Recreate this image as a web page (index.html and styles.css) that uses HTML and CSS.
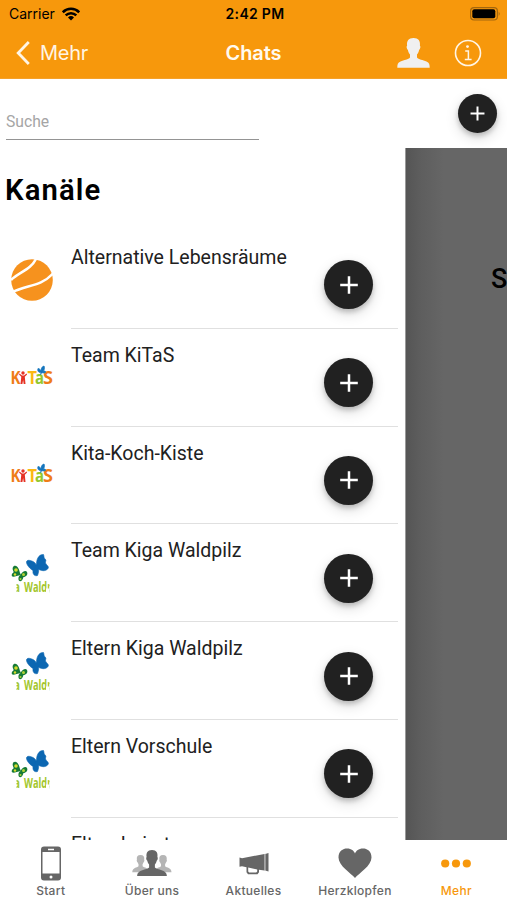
FILE: index.html
```html
<!DOCTYPE html>
<html lang="de">
<head>
  <meta charset="UTF-8">
  <meta name="viewport" content="width=device-width, initial-scale=1.0">
  <title>Chats</title>
  <link rel="stylesheet" href="styles.css">
</head>
<body>
  <!-- Symbole -->
  <svg class="symbols">
    <symbol id="plus" viewBox="0 0 24 24">
      <path d="M12 3.2v17.6M3.2 12h17.6" stroke="#fff" stroke-width="2.5"/>
    </symbol>
    <symbol id="kitas" viewBox="0 0 42 42">
      <g class="kitas-text">
        <text x="-.5" y="27" textLength="10" lengthAdjust="spacingAndGlyphs" fill="#ef7d17">K</text>
        <text x="16.500" y="27" textLength="9.500" lengthAdjust="spacingAndGlyphs" fill="#fbb814">T</text>
        <text x="24" y="27" textLength="9" lengthAdjust="spacingAndGlyphs" fill="#93c82d">a</text>
        <text x="32" y="27" textLength="10" lengthAdjust="spacingAndGlyphs" fill="#ef7d17">S</text>
      </g>
      <g transform="translate(0 1)">
        <circle cx="12" cy="15" r="1.700" fill="#e53224"/>
        <path d="M8.500 15.500l2.500 2h2l2.500-2 .6 1-2.300 2.300.7 7.200h-1.800l-.6-4-.7 4H9.500l.8-7.200L8 16.500z" fill="#e53224"/>
        <path d="M30.500 14.500c-4 .2-4-2.500-3.500-4 2 .3 3 1.600 3.500 4-1-3 .2-6 2.500-6.500 1 2 .4 5-2.500 6.500 2-1.800 3.500-2 4.300-.5-.8 1.200-2.300 1.200-4.300.5l-1 2z" fill="#1475bd" stroke="#1475bd" stroke-width=".8"/>
      </g>
    </symbol>
    <symbol id="waldpilz" viewBox="0 0 42 42">
      <g transform="translate(0 -1)" fill="#0c67b2" stroke="#0c67b2" stroke-width=".6">
        <path d="M24.500 20c-2.500 1-9.300-5.500-9-9 .2-3 5.500-1.500 8 .5 2 1.500 2 4 1 8.500z"/>
        <path d="M25.500 12.500c.3-6 3.300-9.300 7-9 .8 1.800 0 3 1.500 4.500 2 1.500 0 2.500.5 4 .5 1.800 3.500 3 2.800 5-2 3.800-7.800 3.500-11.800-.5z"/>
        <path d="M25 13.500c3 1.500 3.500 6.500 1.500 11-3 1-5-1.500-4.500-4.500l2-3z"/>
      </g>
      <path d="M10 23C5 24 0 26.500.8 22.500c.5-2 2-1 1.700-3C0 15 3.500 12 6.500 15 8.800 17.500 8 20 10 23z" fill="#167a36"/>
      <path d="M9.500 23c2-4 5.500-5 6.500-3 1.300 2.500-1 5-3.500 5-1 4.500-4.500 5.500-5 2.500-.3-2 .5-4 2-4.500z" fill="#167a36"/>
      <circle cx="5" cy="18" r="1.800" fill="#d4dc2d"/>
      <circle cx="12.500" cy="22.500" r="1.500" fill="#b2d235"/>
      <circle cx="4" cy="22.500" r="1.200" fill="#d4dc2d"/>
      <circle cx="9.500" cy="27" r="1" fill="#b2d235"/>
      <svg x="5.500" y="27" width="33" height="14">
        <text class="waldpilz-text" x="-3" y="12.800" textLength="6.500" lengthAdjust="spacingAndGlyphs">a</text>
        <text class="waldpilz-text" x="7.500" y="12.800" textLength="29" lengthAdjust="spacingAndGlyphs">Waldp</text>
        <path d="M29.500 9.500h4V14h-4z" fill="#fff"/>
      </svg>
    </symbol>
  </svg>

  <header class="header">
    <div class="status-bar">
      <div class="carrier">
        <span>Carrier</span>
        <svg width="18" height="14" viewBox="0 0 18 14">
          <path d="M.8 5.300a11.500 11.500 0 0 1 16.400 0M3.700 8.400a7.500 7.500 0 0 1 10.600 0" fill="none" stroke="#000" stroke-width="2.500"/>
          <path d="M9 13.500L6 10.500a4.300 4.300 0 0 1 6 0z"/>
        </svg>
      </div>
      <span class="time">2:42 PM</span>
      <svg class="battery" width="31" height="14" viewBox="0 0 31 14">
        <rect x=".6" y=".6" width="26.800" height="12.400" rx="3.500" fill="none" stroke="#a3670f" stroke-width="1.200"/>
        <rect x="2.300" y="2.300" width="23" height="9" rx="2"/>
        <path d="M28.700 4.700q2 2 0 4.200z" fill="#a3670f"/>
      </svg>
    </div>
    <nav class="nav-bar">
      <a class="back">
        <svg width="14" height="24" viewBox="0 0 14 24"><path d="M12.800 1L2.200 12l10.600 11" fill="none" stroke="#fff5e5" stroke-width="2.800"/></svg>
        <span>Mehr</span>
      </a>
      <h1>Chats</h1>
      <div class="nav-icons">
        <svg width="33" height="30" viewBox="0 0 33 30">
          <path d="M16.500 0c5 0 7 3 6.400 7.500 1 .8.400 3.500-.8 4.500-.4 2-1.300 3.500-2.100 4.500v3c1.500 2 6 2.500 9.500 4 2.700 1 3.200 3 3.200 6.200H.3c0-3.200.5-5.200 3.200-6.200 3.500-1.500 8-2 9.500-4v-3c-.8-1-1.700-2.500-2.100-4.500-1.200-1-1.800-3.700-.8-4.500C9.500 3 11.500 0 16.500 0z" fill="#f0f0f0"/>
        </svg>
        <svg width="28" height="28" viewBox="0 0 28 28">
          <circle cx="14" cy="14" r="12.500" fill="none" stroke="#fff5e5" stroke-width="1.600"/>
          <circle cx="13.500" cy="7.600" r="1.400" fill="#fff5e5"/>
          <path d="M11.200 12h3.200v8.500M10.800 20.600h6.800" fill="none" stroke="#fff5e5" stroke-width="1.500"/>
        </svg>
      </div>
    </nav>
  </header>

  <div class="search-bar">
    <input class="search" type="text" placeholder="Suche">
    <button class="add add-small"><svg><use href="#plus"/></svg></button>
  </div>

  <main class="content">
    <section class="channels">
      <h2>Kanäle</h2>
      <ul>
        <li>
          <svg class="logo" viewBox="0 0 42 42">
            <circle cx="21" cy="21" r="20.800" fill="#f6921e"/>
            <path d="M0 21C8 13 20 11 25.500-1M1 33.500c14-8 28-5 41-19" fill="none" stroke="#fff" stroke-width="2.500"/>
          </svg>
          <div class="channel">
            <span>Alternative Lebensräume</span>
            <button class="add"><svg><use href="#plus"/></svg></button>
          </div>
        </li>
        <li>
          <svg class="logo"><use href="#kitas"/></svg>
          <div class="channel">
            <span>Team KiTaS</span>
            <button class="add"><svg><use href="#plus"/></svg></button>
          </div>
        </li>
        <li>
          <svg class="logo"><use href="#kitas"/></svg>
          <div class="channel">
            <span>Kita-Koch-Kiste</span>
            <button class="add"><svg><use href="#plus"/></svg></button>
          </div>
        </li>
        <li>
          <svg class="logo"><use href="#waldpilz"/></svg>
          <div class="channel">
            <span>Team Kiga Waldpilz</span>
            <button class="add"><svg><use href="#plus"/></svg></button>
          </div>
        </li>
        <li>
          <svg class="logo"><use href="#waldpilz"/></svg>
          <div class="channel">
            <span>Eltern Kiga Waldpilz</span>
            <button class="add"><svg><use href="#plus"/></svg></button>
          </div>
        </li>
        <li>
          <svg class="logo"><use href="#waldpilz"/></svg>
          <div class="channel">
            <span>Eltern Vorschule</span>
            <button class="add"><svg><use href="#plus"/></svg></button>
          </div>
        </li>
        <li>
          <div class="logo"></div>
          <div class="channel"><span>Elternbeirat</span></div>
        </li>
      </ul>
    </section>
    <div class="backdrop"><span>S</span></div>
  </main>

  <footer class="tab-bar">
    <a class="tab">
      <svg width="20" height="36" viewBox="0 0 20 36">
        <path fill-rule="evenodd" d="M3 .5h14a3 3 0 0 1 3 3v28a3 3 0 0 1-3 3H3a3 3 0 0 1-3-3v-28a3 3 0 0 1 3-3zM1.500 6v21.500h17V6zM7 2.800v1.400h6V2.800z"/>
        <circle cx="10" cy="31" r="1.500" fill="#fff"/>
      </svg>
      <span>Start</span>
    </a>
    <a class="tab">
      <svg width="40" height="36" viewBox="0 0 40 36">
        <path id="person" d="M8.500 9c3 0 4.200 2 3.700 4.800.5.800 0 2-.6 2.500l-1 2v2c1.400 1.600 6.400 1.200 6.400 6H.3c0-4.800 4.800-4.400 6.200-6v-2l-1-2c-.6-.5-1.100-1.700-.6-2.500C4.400 11 5.500 9 8.500 9z" fill="#b5b5b5"/>
        <use href="#person" x="22.500"/>
        <path d="M20 4c4.600 0 6 3 5.400 7 .8.800.3 3-.7 3.800-.4 1.700-1 2.800-1.800 3.700v3c2 2.500 12 2 12 8.500H5.100c0-6.500 10-6 12-8.500v-3c-.8-.9-1.400-2-1.800-3.700-1-.8-1.500-3-.7-3.800C14 7 15.400 4 20 4z"/>
      </svg>
      <span>Über uns</span>
    </a>
    <a class="tab">
      <svg width="32" height="36" viewBox="0 0 32 36">
        <path d="M1.500 11.500l2.500.8L26.500 8v16.500L21 23.800v2.400l-1.500 2H10l-1.500-2v-5l-4.500-1-2.500.6zM10.200 21.500v4l1 1h7l1-1v-2z" fill-rule="evenodd"/>
        <path d="M26.500 8l1.500-.3v17.100l-1.500-.3z" fill="#999"/>
        <path d="M28 7.700l2.500-.7v18.500l-2.500-.7z"/>
      </svg>
      <span>Aktuelles</span>
    </a>
    <a class="tab">
      <svg width="34" height="36" viewBox="0 0 34 36">
        <path d="M17 32C13 27 .5 20 .5 11.500.5 5 5 2.500 9 2.500c4.500 0 7 2.500 8 5 1-2.500 3.500-5 8-5 4 0 8.500 2.500 8.500 9C33.500 20 21 27 17 32z"/>
      </svg>
      <span>Herzklopfen</span>
    </a>
    <a class="tab active">
      <svg width="30" height="36" viewBox="0 0 30 36">
        <circle cx="4.200" cy="17.500" r="4.100"/>
        <circle cx="15" cy="17.500" r="4.100"/>
        <circle cx="25.800" cy="17.500" r="4.100"/>
      </svg>
      <span>Mehr</span>
    </a>
  </footer>
</body>
</html>
```
FILE: styles.css
```css
* {
  box-sizing: border-box;
}

body {
  margin: 0;
  height: 900px;
  display: flex;
  flex-direction: column;
  overflow: hidden;
  background: #fff;
  color: #212121;
  font-family: Roboto, sans-serif;
}

.symbols {
  display: none;
}

/* Kopfzeile */
.header {
  height: 79px;
  background: #f7980c;
  border-bottom: 1px solid #f5a12a;
  font-family: Inter, sans-serif;
  flex-shrink: 0;
}

.status-bar,
.nav-bar {
  display: grid;
  grid-template-columns: 1fr auto 1fr;
  align-items: center;
}

.status-bar {
  height: 27px;
  padding: 0 6px 0 9px;
  color: #000;
  font-size: 14px;
}

.carrier {
  display: flex;
  align-items: center;
  gap: 7px;
}

.time {
  font-weight: 600;
  letter-spacing: 0.3px;
}

.battery {
  justify-self: end;
}

.nav-bar {
  height: 51px;
  padding: 0 25px 0 16px;
  color: #fff5e5;
}

.back {
  display: flex;
  align-items: center;
  gap: 10px;
  font-size: 20px;
  letter-spacing: -0.3px;
}

.nav-bar h1 {
  margin: 0 0 0 9px;
  font-size: 20px;
  font-weight: 600;
  letter-spacing: -0.1px;
  color: #fffaf0;
}

.nav-icons {
  display: flex;
  align-items: center;
  justify-content: flex-end;
  gap: 24px;
}

/* Suche */
.search-bar {
  height: 69px;
  flex-shrink: 0;
  display: flex;
  justify-content: space-between;
  padding: 15px 10px 8px 6px;
}

.search {
  width: 253px;
  height: 46px;
  padding: 9px 0 0;
  border: none;
  border-bottom: 1px solid #949494;
  outline: none;
  font-family: Roboto, sans-serif;
  font-size: 15.7px;
}

.search::placeholder {
  color: #a5a5a5;
}

.add {
  width: 49px;
  height: 49px;
  flex-shrink: 0;
  display: flex;
  align-items: center;
  justify-content: center;
  padding: 0;
  border: none;
  border-radius: 50%;
  background: #212121;
  box-shadow: 0 3px 5px rgba(0, 0, 0, 0.2), 0 5px 14px rgba(0, 0, 0, 0.14);
}

.add svg {
  width: 24px;
  height: 24px;
}

.add-small {
  width: 39px;
  height: 39px;
}

.add-small svg {
  width: 19px;
  height: 19px;
}

/* Kanalliste */
.content {
  height: 692px;
  flex-shrink: 0;
  display: flex;
  overflow: hidden;
}

.channels {
  width: 406px;
  flex-shrink: 0;
  border-right: 1px solid #999;
}

.channels h2 {
  height: 83px;
  margin: 0;
  padding: 24px 0 0 5px;
  font-size: 29.3px;
  font-weight: 600;
  line-height: 36px;
  letter-spacing: 1.1px;
  color: #000;
}

.channels ul {
  margin: 0;
  padding: 0;
  list-style: none;
}

.channels li {
  height: 97.8px;
  display: flex;
  gap: 18px;
  padding: 0 7px 0 11px;
}

.logo {
  width: 42px;
  height: 42px;
  margin-top: 28px;
  flex-shrink: 0;
}

.channel {
  flex: 1;
  display: flex;
  justify-content: space-between;
  padding: 15px 25px 0 0;
  border-bottom: 1px solid #e0e0e0;
  font-size: 19.5px;
  line-height: 24px;
}

.channel .add {
  margin-top: 14.4px;
}

.kitas-text {
  font: bold 17.5px "Open Sans", sans-serif;
}

.waldpilz-text {
  font: bold 14px "Open Sans", sans-serif;
  fill: #a3c62c;
}

.backdrop {
  flex: 1;
  padding: 115px 0 0 85px;
  overflow: hidden;
  background: linear-gradient(to right, #555 0, #5e5e5e 15px, #666 38px);
  color: #000;
  font-size: 27px;
  font-weight: 500;
  line-height: 32px;
}

/* Tableiste */
.tab-bar {
  height: 60px;
  flex-shrink: 0;
  display: flex;
  background: #fff;
}

.tab {
  flex: 1;
  display: flex;
  flex-direction: column;
  align-items: center;
  padding-top: 6px;
  fill: #666;
  color: #666;
  font: 500 12px/17px Inter, sans-serif;
  letter-spacing: 0.3px;
}

.active {
  fill: #f7980c;
  color: #f7980c;
}
```
